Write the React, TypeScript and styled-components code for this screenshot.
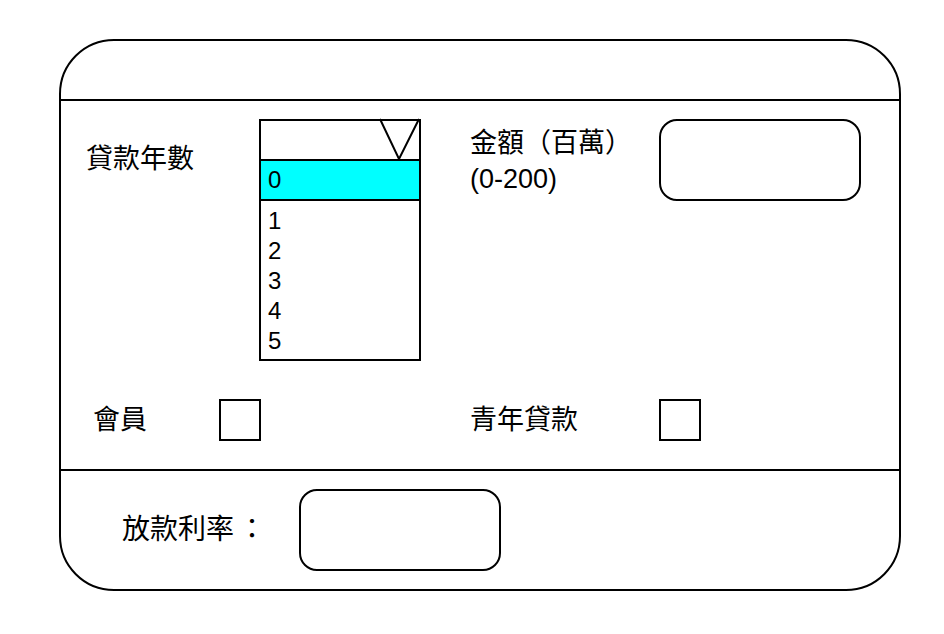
import * as React from 'react';
import styled, { createGlobalStyle } from 'styled-components';

const GlobalStyle = createGlobalStyle`
  body {
    margin: 0;
    background: #ffffff;
    font-family: "Liberation Sans", "Noto Sans CJK TC", sans-serif;
    color: #000000;
  }
`;

const Card = styled.div`
  box-sizing: border-box;
  margin: 39px 0 0 59px;
  width: 842px;
  height: 552px;
  border: 2px solid #000;
  border-radius: 55px;
  display: flex;
  flex-direction: column;
`;

const Header = styled.div`
  height: 58px;
  border-bottom: 2px solid #000;
`;

const Body = styled.div`
  display: grid;
  grid-template-columns: 158px 40px 162px 48px 190px 42px 160px;
  grid-template-rows: 242px 42px;
  row-gap: 38px;
  padding: 18px 0 28px;
  border-bottom: 2px solid #000;
`;

const Footer = styled.div`
  flex: 1;
  display: grid;
  grid-template-columns: 238px 202px;
  align-items: center;
`;

const Label = styled.div<{ $indent?: number; $top?: number; $size?: number }>`
  padding-left: ${p => p.$indent ?? 0}px;
  margin-top: ${p => p.$top ?? 0}px;
  font-size: ${p => p.$size ?? 27}px;
  line-height: 36px;
  white-space: nowrap;
  align-self: ${p => (p.$top !== undefined ? 'start' : 'center')};
`;

const Colon = styled.span`
  margin-left: 4px;
`;

const Dropdown = styled.div`
  box-sizing: border-box;
  grid-column: 3;
  width: 162px;
  height: 242px;
  border: 2px solid #000;
  display: flex;
  flex-direction: column;
`;

const DropHead = styled.div`
  height: 38px;
  border-bottom: 2px solid #000;
  display: flex;
  justify-content: flex-end;
`;

const Selected = styled.div`
  height: 38px;
  background: #00ffff;
  border-bottom: 2px solid #000;
  display: flex;
  align-items: center;
  padding-left: 7px;
  font-size: 24px;
`;

const Options = styled.div`
  padding: 5px 0 0 7px;
  font-size: 24px;
  line-height: 30px;
`;

const Box = styled.div<{ $col: string }>`
  box-sizing: border-box;
  grid-column: ${p => p.$col};
  border: 2px solid #000;
  border-radius: 18px;
  width: 202px;
  height: 82px;
`;

const Check = styled.div<{ $col: number }>`
  box-sizing: border-box;
  grid-column: ${p => p.$col};
  width: 42px;
  height: 42px;
  border: 2px solid #000;
`;

const App = () => {
  return (
    <>
      <GlobalStyle />
      <Card>
        <Header />
        <Body>
          <Label $indent={25} $top={22} style={{ gridColumn: '1 / 3' }}>
            貸款年數
          </Label>
          <Dropdown>
            <DropHead>
              <svg width="40" height="38" viewBox="0 0 40 38" style={{ overflow: 'visible' }}>
                <polyline points="1,-2 20,38 40,-2" fill="none" stroke="#000" strokeWidth="2" />
              </svg>
            </DropHead>
            <Selected>0</Selected>
            <Options>
              {[1, 2, 3, 4, 5].map(n => (
                <div key={n}>{n}</div>
              ))}
            </Options>
          </Dropdown>
          <Label $indent={1} $top={6} style={{ gridColumn: 5 }}>
            金額（百萬）
            <br />
            (0-200)
          </Label>
          <Box $col="6 / 8" style={{ alignSelf: 'start' }} />
          <Label $indent={32}>會員</Label>
          <Check $col={2} />
          <Label $indent={1} style={{ gridColumn: 5 }}>
            青年貸款
          </Label>
          <Check $col={6} />
        </Body>
        <Footer>
          <Label $indent={61} $size={28}>
            放款利率<Colon>：</Colon>
          </Label>
          <Box $col="2" />
        </Footer>
      </Card>
    </>
  );
};

export default App;
